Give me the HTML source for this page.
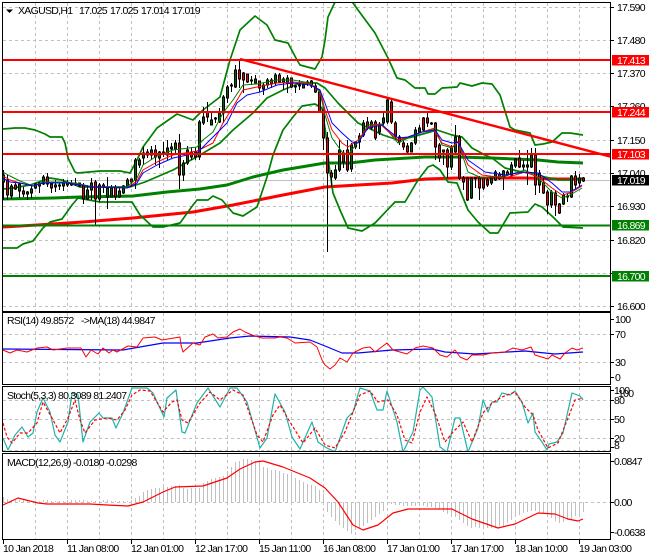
<!DOCTYPE html>
<html><head><meta charset="utf-8"><style>
html,body{margin:0;padding:0;background:#fff;width:650px;height:560px;overflow:hidden}
svg{display:block}
text{font-family:"Liberation Sans",sans-serif;font-size:10.5px;letter-spacing:-.7px;fill:#000}
.w{fill:#fff}
.g{stroke:#c0c0c0;stroke-width:1;stroke-dasharray:3 3;fill:none}
.l{fill:none;stroke-linejoin:round}
</style></head><body>
<svg width="650" height="560" viewBox="0 0 650 560" xmlns="http://www.w3.org/2000/svg">
<defs>
<clipPath id="m"><rect x="3" y="3" width="607" height="307"/></clipPath>
<clipPath id="s"><rect x="3" y="387" width="607" height="64"/></clipPath>
</defs>
<rect width="650" height="560" fill="#fff"/>
<!-- grid -->
<path class="g" d="M35.5 3V310M67.5 3V310M99.5 3V310M131.5 3V310M163.5 3V310M195.5 3V310M227.5 3V310M259.5 3V310M291.5 3V310M323.5 3V310M355.5 3V310M387.5 3V310M419.5 3V310M451.5 3V310M483.5 3V310M515.5 3V310M547.5 3V310M579.5 3V310"/>
<path class="g" d="M3 7.5H610M3 40.5H610M3 73.5H610M3 106.5H610M3 140.5H610M3 173.5H610M3 206.5H610M3 240.5H610M3 273.5H610M3 306.5H610"/>
<path class="g" d="M35.5 313V384M67.5 313V384M99.5 313V384M131.5 313V384M163.5 313V384M195.5 313V384M227.5 313V384M259.5 313V384M291.5 313V384M323.5 313V384M355.5 313V384M387.5 313V384M419.5 313V384M451.5 313V384M483.5 313V384M515.5 313V384M547.5 313V384M579.5 313V384"/>
<path class="g" d="M3 334.5H610M3 362.5H610"/>
<path class="g" d="M35.5 387V451M67.5 387V451M99.5 387V451M131.5 387V451M163.5 387V451M195.5 387V451M227.5 387V451M259.5 387V451M291.5 387V451M323.5 387V451M355.5 387V451M387.5 387V451M419.5 387V451M451.5 387V451M483.5 387V451M515.5 387V451M547.5 387V451M579.5 387V451"/>
<path class="g" d="M3 400.5H610M3 419.5H610M3 438.5H610M3 450.5H610"/>
<path class="g" d="M35.5 454V539M67.5 454V539M99.5 454V539M131.5 454V539M163.5 454V539M195.5 454V539M227.5 454V539M259.5 454V539M291.5 454V539M323.5 454V539M355.5 454V539M387.5 454V539M419.5 454V539M451.5 454V539M483.5 454V539M515.5 454V539M547.5 454V539M579.5 454V539"/>
<path class="g" d="M3 502.5H610"/>
<path d="M3 180.5H610" stroke="#c0c0c0" fill="none"/>

<g clip-path="url(#m)">
<!-- thick MAs -->
<polyline class="l" stroke="#008000" stroke-width="3" points="3,199 53,198 80,197 133,196 167,192 200,189 227,185 253,177 283,170 325,163 350,163 375,160 425,157 458,157 492,158 538,160 558,162 583,163"/>
<polyline class="l" stroke="#ff0000" stroke-width="3" points="3,227 37,225 83,222 133,218 193,212 233,205 283,195 325,187 358,185 392,183 425,179 458,178 525,178 558,179 583,179"/>
<!-- Bollinger -->
<polyline class="l" stroke="#008000" stroke-width="1.7" points="3,129 15,128 25,128 35,130 45,134 50,137 62,137 65,143 68,158 75,172 78,173 100,171 120,171 130,173 137,160 143,147 157,128 177,114 193,120 203,110 220,97 230,60 240,30 255,16 267,25 275,40 288,43 297,60 300,65 315,69 322,57 325,40 328,17 335,2 340,-8 350,-8 353,3 358,10 375,33 388,58 397,78 405,80 415,88 425,88 428,94 435,94 442,88 457,87 460,83 472,86 482,83 492,84 500,95 510,127 515,130 530,133 535,145 543,144 552,142 562,133 570,133 583,135"/>
<polyline class="l" stroke="#008000" stroke-width="1.7" points="3,248 17,248 23,244 33,241 43,228 50,222 62,219 72,205 78,198 100,202 132,202 140,215 153,227 163,227 180,223 193,205 197,200 208,200 213,196 222,200 233,213 243,216 257,207 267,177 273,155 283,130 293,117 302,106 315,104 322,108 326,135 329,165 333,193 340,210 348,228 362,231 375,223 395,202 405,202 418,180 428,167 433,165 440,170 448,182 457,183 468,210 478,222 490,233 498,233 510,213 528,212 535,204 542,207 553,217 563,227 583,228"/>
<polyline class="l" stroke="#008000" stroke-width="1.7" points="3,189 13,188 30,185 50,178 62,180 80,187 130,187 145,182 173,170 200,155 220,143 233,130 253,113 267,98 283,90 300,83 317,83 325,88 338,103 358,123 383,135 398,140 412,137 437,130 452,135 462,137 472,148 485,155 492,158 505,168 522,172 532,173 545,177 558,180 572,180 583,178"/>
<!-- wicks -->
<path fill="none" stroke="#000" d="M3.5 170V200M7.5 175V200M11.5 184V199M15.5 183V190M19.5 183V198M23.5 187V197M27.5 191V200M31.5 185V198M35.5 183V189M39.5 182V193M43.5 175V185M47.5 173V187M51.5 183V193M55.5 180V192M59.5 183V190M63.5 179V191M67.5 180V187M71.5 180V186M75.5 178V186M79.5 183V187M83.5 183V204M87.5 185V200M91.5 178V200M95.5 180V226M99.5 183V202M103.5 183V193M107.5 177V209M111.5 185V197M115.5 185V200M119.5 188V198M123.5 185V194M127.5 178V187M131.5 179V187M135.5 158V189M139.5 158V168M143.5 147V165M147.5 149V158M151.5 146V160M155.5 145V165M159.5 151V168M163.5 142V157M167.5 140V160M171.5 143V158M175.5 140V155M179.5 134V189M183.5 160V181M187.5 146V165M191.5 147V160M195.5 147V160M199.5 120V160M203.5 107V125M207.5 102V122M211.5 113V125M215.5 117V123M219.5 108V123M223.5 95V123M227.5 85V103M231.5 83V92M235.5 65V88M239.5 59V88M243.5 72V93M247.5 74V83M251.5 76V85M255.5 75V83M259.5 81V92M263.5 83V95M267.5 78V88M271.5 78V88M275.5 73V85M279.5 73V83M283.5 77V90M287.5 75V93M291.5 78V88M295.5 85V93M299.5 80V90M303.5 83V88M307.5 80V86M311.5 80V88M315.5 83V93M319.5 90V113M323.5 108V150M327.5 132V252M331.5 170V187M335.5 165V180M339.5 140V172M343.5 150V168M347.5 140V172M351.5 143V172M355.5 141V149M359.5 133V149M363.5 120V137M367.5 117V130M371.5 120V130M375.5 120V140M379.5 122V135M383.5 113V125M387.5 99V124M391.5 99V124M395.5 121V140M399.5 135V145M403.5 140V150M407.5 143V153M411.5 142V152M415.5 127V145M419.5 125V133M423.5 117V132M427.5 112V127M431.5 122V125M435.5 122V160M439.5 143V162M443.5 150V165M447.5 148V178M451.5 145V170M455.5 125V155M459.5 135V180M463.5 176V190M467.5 177V201M471.5 177V199M475.5 177V188M479.5 176V200M483.5 177V190M487.5 178V187M491.5 176V185M495.5 170V181M499.5 172V180M503.5 170V190M507.5 170V176M511.5 162V176M515.5 158V168M519.5 150V168M523.5 160V170M527.5 150V185M531.5 148V168M535.5 148V195M539.5 170V193M543.5 178V194M547.5 190V214M551.5 190V208M555.5 190V216M559.5 203V214M563.5 193V205M567.5 193V202M571.5 175V198M575.5 171V190M579.5 174V187M583.5 177V182"/>
<!-- green bodies -->
<path fill="#006400" stroke="#000" d="M2.5 175h2v7h-2zM10.5 186h2v10h-2zM18.5 184h2v7h-2zM26.5 192h2v2h-2zM30.5 189h2v4h-2zM34.5 184h2v4h-2zM38.5 183h2v3h-2zM42.5 177h2v7h-2zM54.5 185h2v2h-2zM62.5 183h2v3h-2zM70.5 183h2v2h-2zM74.5 183h2v1h-2zM86.5 190h2v9h-2zM90.5 183h2v7h-2zM98.5 185h2v14h-2zM106.5 188h2v9h-2zM110.5 188h2v9h-2zM118.5 191h2v6h-2zM122.5 186h2v7h-2zM126.5 180h2v7h-2zM134.5 160h2v20h-2zM138.5 160h2v5h-2zM142.5 153h2v5h-2zM150.5 150h2v5h-2zM158.5 152h2v6h-2zM166.5 148h2v7h-2zM170.5 147h2v2h-2zM174.5 143h2v6h-2zM182.5 163h2v12h-2zM186.5 150h2v13h-2zM198.5 122h2v35h-2zM202.5 117h2v6h-2zM210.5 120h2v5h-2zM218.5 113h2v9h-2zM222.5 97h2v16h-2zM226.5 87h2v11h-2zM230.5 85h2v1h-2zM234.5 70h2v17h-2zM250.5 80h2v1h-2zM254.5 79h2v4h-2zM262.5 85h2v4h-2zM266.5 80h2v5h-2zM274.5 75h2v8h-2zM282.5 79h2v3h-2zM286.5 78h2v5h-2zM298.5 85h2v1h-2zM302.5 85h2v3h-2zM306.5 82h2v1h-2zM310.5 81h2v5h-2zM334.5 170h2v8h-2zM338.5 150h2v20h-2zM350.5 145h2v24h-2zM354.5 142h2v5h-2zM358.5 136h2v6h-2zM362.5 123h2v12h-2zM370.5 122h2v6h-2zM378.5 124h2v8h-2zM382.5 118h2v5h-2zM386.5 100h2v22h-2zM410.5 143h2v9h-2zM414.5 130h2v13h-2zM418.5 128h2v4h-2zM450.5 147h2v20h-2zM454.5 137h2v15h-2zM470.5 178h2v20h-2zM474.5 178h2v1h-2zM490.5 178h2v5h-2zM494.5 172h2v8h-2zM502.5 171h2v6h-2zM510.5 165h2v10h-2zM514.5 159h2v7h-2zM522.5 165h2v2h-2zM526.5 165h2v2h-2zM530.5 155h2v12h-2zM538.5 173h2v12h-2zM550.5 192h2v13h-2zM562.5 195h2v9h-2zM566.5 196h2v1h-2zM570.5 176h2v21h-2zM578.5 178h2v5h-2z"/>
<!-- red bodies -->
<path fill="#e60000" stroke="#000" d="M6.5 180h2v15h-2zM14.5 185h2v4h-2zM22.5 191h2v3h-2zM46.5 177h2v7h-2zM50.5 184h2v4h-2zM58.5 185h2v1h-2zM66.5 183h2v2h-2zM78.5 183h2v3h-2zM82.5 186h2v13h-2zM94.5 182h2v17h-2zM102.5 185h2v2h-2zM114.5 187h2v10h-2zM130.5 179h2v3h-2zM146.5 152h2v3h-2zM154.5 150h2v7h-2zM162.5 152h2v1h-2zM178.5 143h2v32h-2zM190.5 152h2v5h-2zM194.5 152h2v5h-2zM206.5 112h2v5h-2zM214.5 118h2v1h-2zM238.5 70h2v9h-2zM242.5 73h2v7h-2zM246.5 74h2v8h-2zM258.5 81h2v7h-2zM270.5 80h2v4h-2zM278.5 75h2v7h-2zM290.5 78h2v9h-2zM294.5 86h2v1h-2zM314.5 86h2v6h-2zM318.5 92h2v20h-2zM322.5 110h2v28h-2zM326.5 138h2v35h-2zM330.5 173h2v4h-2zM342.5 153h2v9h-2zM346.5 150h2v20h-2zM366.5 122h2v5h-2zM374.5 122h2v16h-2zM390.5 102h2v20h-2zM394.5 123h2v14h-2zM398.5 137h2v5h-2zM402.5 143h2v4h-2zM406.5 146h2v6h-2zM422.5 118h2v12h-2zM426.5 118h2v5h-2zM430.5 123h2v1h-2zM434.5 123h2v24h-2zM438.5 145h2v13h-2zM442.5 150h2v2h-2zM446.5 150h2v17h-2zM458.5 137h2v41h-2zM462.5 178h2v4h-2zM466.5 178h2v22h-2zM478.5 178h2v10h-2zM482.5 178h2v10h-2zM486.5 180h2v5h-2zM498.5 174h2v5h-2zM506.5 172h2v3h-2zM518.5 158h2v9h-2zM534.5 155h2v30h-2zM542.5 183h2v10h-2zM546.5 192h2v13h-2zM554.5 193h2v12h-2zM558.5 204h2v9h-2zM574.5 176h2v9h-2zM582.5 178h2v3h-2z"/>
<!-- EMAs -->
<polyline class="l" stroke="#008000" stroke-width="1" points="3,172 10,176 20,181 33,186 43,182 67,182 80,184 93,187 127,187 137,178 143,165 157,156 173,150 197,147 203,140 213,132 223,113 233,100 243,85 257,84 277,80 293,80 310,83 320,92 325,115 332,138 342,152 348,155 358,142 368,125 382,124 398,143 408,138 422,132 435,128 442,145 452,148 458,142 468,172 482,178 505,176 525,170 538,178 552,192 562,198 570,195 582,188"/>
<polyline class="l" stroke="#ff0000" stroke-width="1" points="3,176 10,180 20,183 33,186 43,183 67,183 80,185 93,187 127,188 137,181 143,170 157,162 173,155 197,151 213,143 223,123 233,107 243,90 257,87 277,83 293,82 310,84 320,90 325,110 332,130 342,143 348,147 358,140 368,127 380,124 398,140 408,137 422,132 433,129 442,143 452,147 458,142 468,165 482,175 505,178 525,172 538,177 552,188 562,195 570,193 582,186"/>
<polyline class="l" stroke="#0000ff" stroke-width="1" points="3,178 10,182 20,183 33,186 43,183 67,183 80,185 93,187 127,188 137,183 143,173 157,165 173,158 197,153 203,147 217,133 227,123 237,103 247,95 260,92 277,85 293,83 310,85 320,90 325,103 332,123 342,133 352,142 358,143 368,128 382,125 398,138 408,137 422,132 435,130 442,140 452,143 458,142 468,160 485,172 505,175 525,172 538,173 552,183 562,192 570,192 582,185"/>
<!-- objects -->
<path d="M240 59L612 157" stroke="#ff0000" stroke-width="2.4" fill="none"/>
<path d="M3 60H610M3 112H610M3 154H610" stroke="#ff0000" stroke-width="2" fill="none"/>
<path d="M3 225.500H610M3 276H610" stroke="#008000" stroke-width="2" fill="none"/>
</g>

<!-- RSI -->
<polyline class="l" stroke="#0000ff" stroke-width="1.2" points="3,349 123,350 140,347 163,343 197,343 230,338 250,336 290,337 310,340 325,346 342,353 358,353 392,350 432,349 445,352 475,354 525,351 555,354 583,352"/>
<polyline class="l" stroke="#ff0000" stroke-width="1" points="3,350 10,353 17,350 27,352 37,348 47,347 53,350 67,348 81,348 86,357 91,350 98,354 103,348 109,353 113,350 117,352 128,346 137,347 143,338 155,337 162,340 180,337 181,345 183,352 193,343 200,345 205,337 213,334 218,338 227,337 233,332 240,329 245,332 252,335 262,338 275,338 280,337 287,338 295,343 310,342 317,347 322,360 325,365 330,369 335,365 340,358 347,362 353,353 363,348 370,347 375,352 387,343 393,350 407,354 415,348 423,346 433,348 440,355 447,357 455,350 460,357 467,360 472,355 483,355 492,353 505,352 513,348 522,350 531,347 535,355 548,359 552,355 560,359 565,353 572,348 577,350 583,348"/>

<!-- Stoch -->
<g clip-path="url(#s)">
<polyline class="l" stroke="#20b2aa" stroke-width="1.2" points="3,438 8,450 15,435 22,427 28,437 33,433 37,412 43,398 50,412 55,435 60,442 68,422 72,393 78,395 83,442 90,422 99,413 103,418 112,418 116,428 123,413 132,388 147,388 153,393 164,417 167,398 176,390 182,432 185,433 197,403 208,388 220,407 230,388 237,388 247,402 260,448 267,438 275,394 285,412 292,437 300,449 312,422 318,442 325,447 335,452 347,418 353,412 360,388 370,391 377,410 383,410 387,391 397,422 403,452 413,432 420,390 423,387 432,397 440,447 447,452 455,418 460,418 468,452 478,428 483,400 488,412 492,402 497,402 502,393 510,395 515,391 522,402 528,423 533,413 535,432 542,442 547,450 549,444 557,442 563,433 572,393 580,396 583,400"/>
<polyline class="l" stroke="#ff0000" stroke-width="1.2" stroke-dasharray="3 2" points="3,423 7,437 12,443 20,433 28,433 37,423 43,402 52,418 60,433 68,418 75,400 80,420 85,433 95,420 107,418 117,420 125,410 132,395 140,390 150,391 163,412 172,402 177,400 182,420 188,423 200,403 210,392 220,400 233,390 243,395 257,435 263,442 273,415 280,405 290,422 303,443 315,428 325,445 335,448 345,432 353,412 360,395 370,391 378,402 388,400 397,415 405,440 412,443 420,412 427,397 435,413 445,442 453,432 463,422 472,442 483,413 492,403 502,397 515,392 525,407 533,415 538,430 548,448 558,443 568,418 575,400 583,398"/>
</g>

<!-- MACD hist -->
<path fill="none" stroke="#c0c0c0" d="M3.5 502V497M7.5 502V499M11.5 502V500M15.5 502V500M19.5 502V500M23.500 502V500M27.5 502V500M31.5 502V501M35.5 502V501M39.5 502V501M43.5 502V500M47.5 502V500M51.5 502V501M55.5 502V501M59.5 502V501M63.5 502V501M67.5 502V500M71.5 502V500M75.5 502V500M79.5 502V500M83.5 502V500M87.5 502V501M91.5 502V501M95.5 502V501M99.5 502V501M103.5 502V500M107.5 502V500M111.5 502V501M115.5 502V501M119.5 502V501M123.5 502V501M127.5 502V501M131.5 502V500M135.5 502V498M139.5 502V496M143.5 502V492M147.5 502V490M151.5 502V489M155.5 502V488M159.5 502V488M163.5 502V487M167.5 502V487M171.5 502V486M175.5 502V486M179.5 502V485M183.5 502V488M187.5 502V489M191.5 502V488M195.5 502V488M199.5 502V488M203.5 502V483M207.5 502V481M211.5 502V479M215.5 502V478M219.5 502V477M223.5 502V476M227.5 502V471M231.5 502V467M235.5 502V462M239.5 502V461M243.5 502V459M247.5 502V459M251.5 502V460M255.5 502V461M259.5 502V463M263.5 502V467M267.5 502V468M271.5 502V470M275.5 502V470M279.5 502V471M283.5 502V473M287.5 502V474M291.5 502V475M295.5 502V478M299.5 502V480M303.5 502V482M307.5 502V484M311.5 502V485M315.5 502V486M319.5 502V490M323.5 502V494M327.5 502V512M331.5 502V517M335.5 502V521M339.5 502V525M343.5 502V528M347.5 502V531M351.5 502V534M355.5 502V530M359.5 502V528M363.5 502V526M367.5 502V523M371.5 502V520M375.5 502V517M379.5 502V514M383.5 502V511M387.5 502V503M391.5 502V504M395.5 502V505M399.5 502V505M403.5 502V506M407.5 502V506M411.5 502V506M415.5 502V506M419.5 502V506M423.5 502V506M427.5 502V507M431.5 502V507M435.5 502V508M439.5 502V509M443.5 502V512M447.5 502V514M451.5 502V515M455.5 502V517M459.5 502V520M463.5 502V523M467.5 502V526M471.5 502V528M475.5 502V527M479.5 502V528M483.5 502V528M487.5 502V528M491.5 502V528M495.5 502V527M499.5 502V526M503.5 502V526M507.5 502V523M511.5 502V520M515.5 502V517M519.5 502V515M523.5 502V513M527.5 502V512M531.5 502V511M535.5 502V511M539.5 502V512M543.5 502V513M547.5 502V515M551.5 502V518M555.5 502V521M559.5 502V523M563.5 502V522M567.5 502V520M571.5 502V519M575.5 502V516M579.5 502V514M583.5 502V512"/>
<polyline class="l" stroke="#ff0000" stroke-width="1.2" points="3,505 18,498 38,503 47,504 90,504 107,505 128,506 143,502 163,492 175,487 203,486 227,478 240,469 255,462 263,461 283,467 310,478 325,488 338,502 353,525 363,530 378,525 393,513 408,509 452,509 472,519 498,528 515,524 538,513 555,514 568,519 578,521 583,519"/>

<!-- frame -->
<path fill="none" stroke="#000" d="M2.5 2.500H610.500V311.500H2.500ZM2.500 312.500H610.500V384.500H2.500ZM2.500 386.500H610.500V451.500H2.500ZM2.500 453.500H610.500V539.500H2.500Z"/>
<!-- y ticks -->
<path fill="none" stroke="#000" d="M611 7.500h3M611 40.500h3M611 73.500h3M611 106.500h3M611 140.500h3M611 173.500h3M611 206.500h3M611 240.500h3M611 273.500h3M611 306.500h3M611 319.500h3M611 334.500h3M611 362.500h3M611 377.500h3M611 390.500h3M611 400.500h3M611 419.500h3M611 438.500h3M611 447.500h3M611 461.500h3M611 502.500h3M611 532.500h3"/>
<!-- x ticks -->
<path fill="none" stroke="#000" d="M3.500 540v4M67.500 540v4M131.500 540v4M195.500 540v4M259.500 540v4M323.500 540v4M387.500 540v4M451.500 540v4M515.500 540v4M579.500 540v4"/>

<!-- header -->
<path d="M6 9.500h7l-3.500 3.500z" fill="#000"/>
<text x="18" y="14">XAGUSD,H1</text>
<text x="79" y="14">17.025</text><text x="110" y="14">17.025</text><text x="141" y="14">17.014</text><text x="172" y="14">17.019</text>

<!-- y labels -->
<text x="617" y="11">17.590</text>
<text x="617" y="44">17.480</text>
<text x="617" y="77">17.370</text>
<text x="617" y="110">17.260</text>
<text x="617" y="144">17.150</text>
<text x="617" y="177">17.040</text>
<text x="617" y="210">16.930</text>
<text x="617" y="244">16.820</text>
<text x="617" y="310">16.600</text>
<rect x="612" y="55" width="37" height="10.500" fill="#ff0000"/><text class="w" x="617" y="64">17.413</text>
<rect x="612" y="107" width="37" height="10.500" fill="#ff0000"/><text class="w" x="617" y="116">17.244</text>
<rect x="612" y="149" width="37" height="10.500" fill="#ff0000"/><text class="w" x="617" y="158">17.103</text>
<rect x="612" y="175" width="37" height="10.500" fill="#000"/><text class="w" x="617" y="184">17.019</text>
<rect x="612" y="220" width="37" height="10.500" fill="#008000"/><text class="w" x="617" y="229">16.869</text>
<rect x="612" y="271" width="37" height="10.500" fill="#008000"/><text class="w" x="617" y="280">16.700</text>

<!-- RSI -->
<text x="7" y="324">RSI(14) 49.8572</text><text x="81" y="324">-&gt;MA(18) 44.9847</text>
<text x="615" y="323">100</text><text x="615" y="338">70</text><text x="615" y="366">30</text><text x="615" y="381">0</text>
<!-- Stoch -->
<text x="7" y="399">Stoch(5,3,3) 80.3089 81.2407</text>
<text x="614" y="394">100</text><text x="618" y="397">100</text><text x="614" y="404">80</text><text x="614" y="423">50</text><text x="614" y="442">20</text><text x="614" y="449">8</text>
<!-- MACD -->
<text x="7" y="466">MACD(12,26,9) -0.0180 -0.0298</text>
<text x="614" y="465">0.0847</text><text x="614" y="506">0.00</text><text x="614" y="536">-0.0638</text>
<!-- x labels -->
<text x="3" y="552">10 Jan 2018</text>
<text x="67" y="552">11 Jan 08:00</text>
<text x="131" y="552">12 Jan 01:00</text>
<text x="195" y="552">12 Jan 17:00</text>
<text x="259" y="552">15 Jan 11:00</text>
<text x="323" y="552">16 Jan 08:00</text>
<text x="387" y="552">17 Jan 01:00</text>
<text x="451" y="552">17 Jan 17:00</text>
<text x="515" y="552">18 Jan 10:00</text>
<text x="579" y="552">19 Jan 03:00</text>
</svg>
</body></html>
